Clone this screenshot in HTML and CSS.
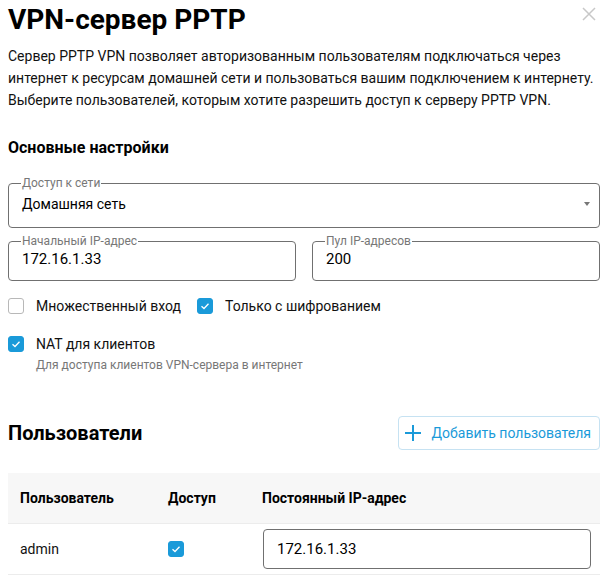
FILE: index.html
```html
<!DOCTYPE html>
<html lang="ru">
<head>
<meta charset="utf-8">
<link rel="stylesheet" href="styles.css">
</head>
<body>
<div class="dialog">
  <button class="close" aria-label="Закрыть">
    <svg width="14" height="14" viewBox="0 0 14 14"><path d="M1 1L13 13M13 1L1 13" stroke="#c8c8c8" stroke-width="1.5"/></svg>
  </button>
  <h1 class="title">VPN-сервер PPTP</h1>
  <p class="desc">Сервер PPTP VPN позволяет авторизованным пользователям подключаться через интернет к ресурсам домашней сети и пользоваться вашим подключением к интернету. Выберите пользователей, которым хотите разрешить доступ к серверу PPTP VPN.</p>

  <h2 class="section">Основные настройки</h2>

  <fieldset class="field first">
    <legend>Доступ к сети</legend>
    <div class="value select">Домашняя сеть <span class="arrow"></span></div>
  </fieldset>

  <div class="row2">
    <fieldset class="field">
      <legend>Начальный IP-адрес</legend>
      <div class="value">172.16.1.33</div>
    </fieldset>
    <fieldset class="field">
      <legend>Пул IP-адресов</legend>
      <div class="value">200</div>
    </fieldset>
  </div>

  <div class="checks">
    <label class="check"><span class="box"></span>Множественный вход</label>
    <label class="check"><span class="box on"><svg width="16" height="16" viewBox="0 0 16 16"><path d="M4.5 8.2L7 10.5L11.5 5.8" fill="none" stroke="#fff" stroke-width="1.3"/></svg></span>Только с шифрованием</label>
  </div>
  <div class="nat">
    <label class="check"><span class="box on"><svg width="16" height="16" viewBox="0 0 16 16"><path d="M4.5 8.2L7 10.5L11.5 5.8" fill="none" stroke="#fff" stroke-width="1.3"/></svg></span>NAT для клиентов</label>
    <div class="hint">Для доступа клиентов VPN-сервера в интернет</div>
  </div>

  <div class="users-head">
    <h2 class="users-title">Пользователи</h2>
    <button class="add"><svg width="16" height="16" viewBox="0 0 16 16"><path d="M8 0V16M0 8H16" stroke="#1a9ad9" stroke-width="2"/></svg>Добавить пользователя</button>
  </div>

  <table class="users">
    <thead>
      <tr><th class="c1">Пользователь</th><th class="c2">Доступ</th><th>Постоянный IP-адрес</th></tr>
    </thead>
    <tbody>
      <tr>
        <td class="c1">admin</td>
        <td class="c2"><span class="box on"><svg width="16" height="16" viewBox="0 0 16 16"><path d="M4.5 8.2L7 10.5L11.5 5.8" fill="none" stroke="#fff" stroke-width="1.3"/></svg></span></td>
        <td><div class="ipinput">172.16.1.33</div></td>
      </tr>
    </tbody>
  </table>
</div>
</body>
</html>
```
FILE: styles.css
```css
* { box-sizing: border-box; }
body {
  margin: 0;
  background: #fff;
  font-family: Roboto, "Liberation Sans", sans-serif;
  color: #111;
}
.dialog {
  position: relative;
  padding: 0 8px;
}
.close {
  position: absolute;
  top: 4px;
  right: 12px;
  background: none;
  border: 0;
  padding: 0;
  width: 14px;
  height: 14px;
}
.title {
  margin: 3px 0 0;
  font-size: 28px;
  line-height: 34px;
  font-weight: 700;
  color: #000;
}
.desc {
  margin: 8px 0 0;
  font-size: 14px;
  line-height: 22px;
  color: #111;
}
.section {
  margin: 26px 0 0;
  font-size: 16px;
  line-height: 22px;
  font-weight: 700;
  color: #000;
}
.field {
  margin: 0;
  border: 1px solid #707070;
  border-radius: 4px;
  padding: 0 13px 10px;
  min-width: 0;
}
.field legend {
  font-size: 12px;
  line-height: 14px;
  color: #777;
  padding: 0 1px;
  margin-left: -1px;
}
.field.first { margin-top: 17px; }
.value {
  font-size: 15px;
  line-height: 22px;
  color: #000;
}
.select {
  display: flex;
  align-items: center;
  justify-content: space-between;
  font-size: 14px;
  margin-top: 3px;
  padding-bottom: 2px;
}
.arrow {
  width: 0;
  height: 0;
  border-left: 3px solid transparent;
  border-right: 3px solid transparent;
  border-top: 4px solid #777;
  margin-right: -4px;
}
.row2 {
  display: grid;
  grid-template-columns: 1fr 1fr;
  gap: 16px;
  margin-top: 6px;
}
.checks {
  display: flex;
  gap: 16px;
  margin-top: 16px;
}
.check {
  display: flex;
  align-items: center;
  font-size: 14px;
  line-height: 18px;
  color: #111;
}
.box {
  width: 16px;
  height: 16px;
  border: 1px solid #b8b8b8;
  border-radius: 3px;
  margin-right: 12px;
  display: inline-block;
  flex: none;
}
.box.on {
  background: #1a9ad9;
  border-color: #1a9ad9;
}
.box svg { display: block; margin: -1px; }
.nat { margin-top: 20px; }
.hint {
  font-size: 12px;
  line-height: 16px;
  color: #777;
  margin: 4px 0 0 28px;
}
.users-head {
  display: flex;
  align-items: center;
  justify-content: space-between;
  margin-top: 43px;
}
.users-title {
  margin: 0;
  font-size: 20px;
  font-weight: 700;
  color: #000;
}
.add {
  display: flex;
  align-items: center;
  gap: 11px;
  height: 34px;
  padding: 0 8px 0 6px;
  background: #fff;
  border: 1px solid #c6e2f2;
  border-radius: 4px;
  font-family: inherit;
  font-size: 14px;
  color: #1a9ad9;
}
.users {
  width: 100%;
  border-collapse: collapse;
  margin-top: 23px;
  font-size: 14px;
}
.users th {
  background: #f7f7f7;
  text-align: left;
  font-weight: 700;
  height: 50px;
  padding: 0 12px;
  color: #000;
  border-bottom: 1px solid #ececec;
}
.users td {
  height: 51px;
  padding: 0 12px;
  border-bottom: 1px solid #ececec;
}
.users .c1 { width: 148px; }
.users .c2 { width: 94px; }
.users td .box { display: block; margin: 0; }
.ipinput {
  height: 40px;
  border: 1px solid #707070;
  border-radius: 4px;
  padding: 0 13px;
  display: flex;
  align-items: center;
  font-size: 15px;
  color: #000;
  margin-left: 1px;
  margin-right: -3px;
}
```
